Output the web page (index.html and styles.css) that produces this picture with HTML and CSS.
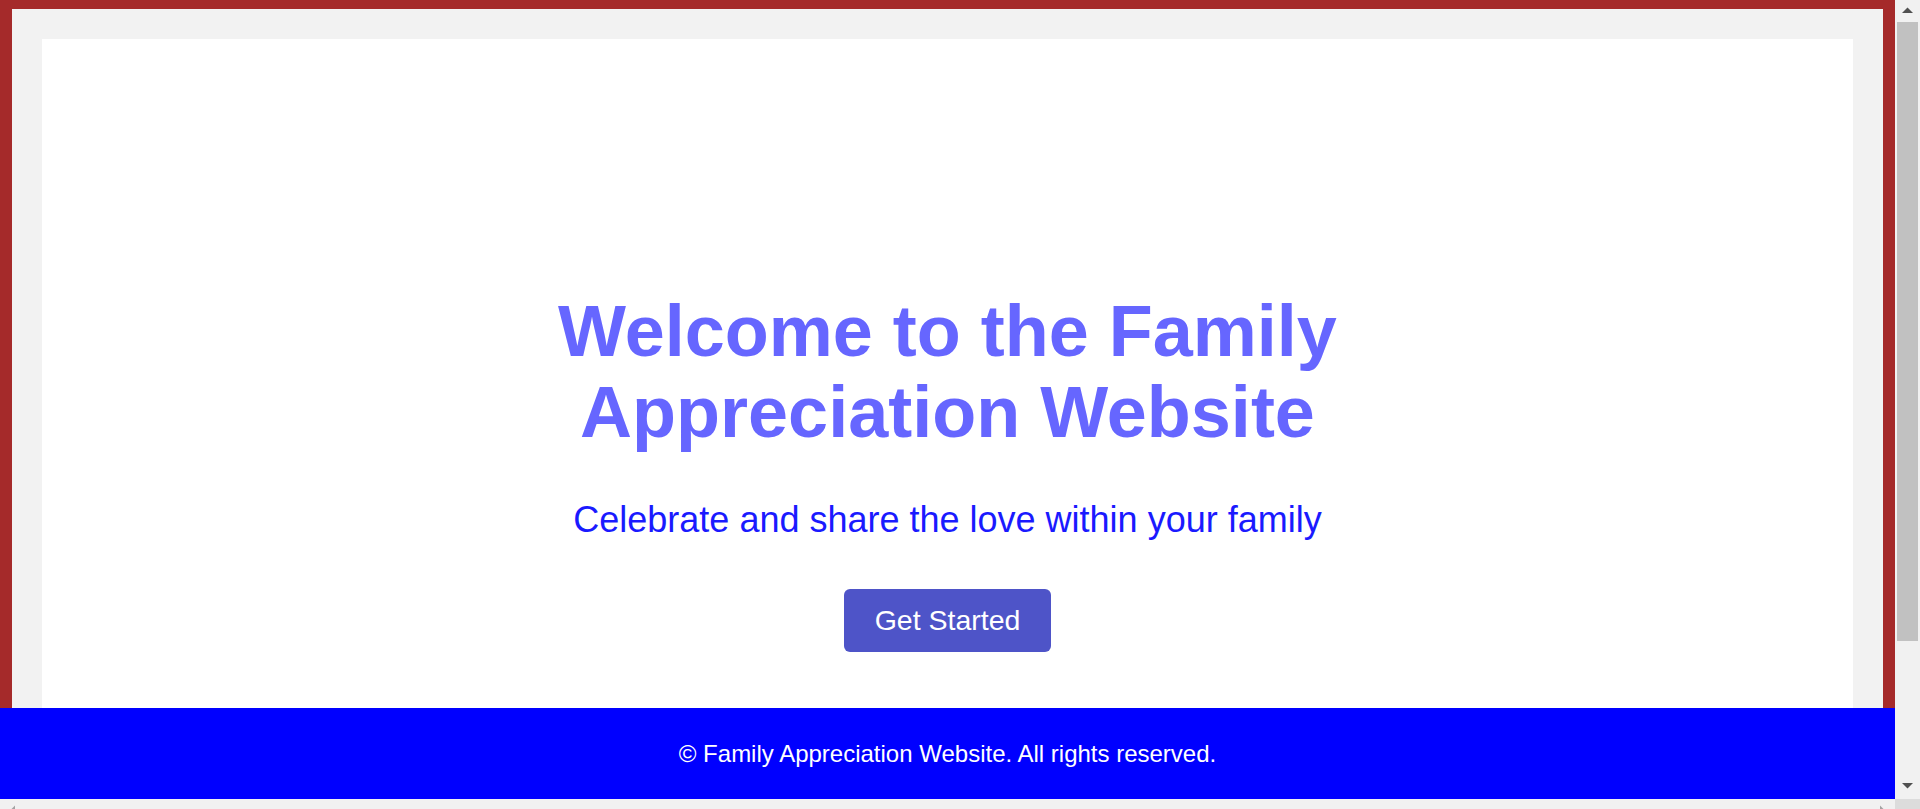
FILE: index.html
```html
<!DOCTYPE html>
<html lang="en">
<head>
<meta charset="UTF-8">
<title>Family Appreciation Website</title>
<link rel="stylesheet" href="styles.css">
</head>
<body>
  <div class="frame">
    <div class="viewport">
      <div class="sheet">
        <main class="page">
          <section class="hero">
            <h1 class="hero-title">Welcome to the Family Appreciation Website</h1>
            <p class="hero-subtitle">Celebrate and share the love within your family</p>
            <a class="hero-button" href="#">Get Started</a>
          </section>
        </main>
      </div>
      <footer class="site-footer">
        <p class="footer-text">&copy; Family Appreciation Website. All rights reserved.</p>
      </footer>
    </div>
    <div class="vscroll">
      <div class="vscroll-btn vscroll-btn-up">
        <svg width="25" height="20" viewBox="0 0 25 20"><polygon points="7,13 18,13 12.5,7.5" fill="#505050"/></svg>
      </div>
      <div class="vscroll-track">
        <div class="vscroll-thumb"></div>
      </div>
      <div class="vscroll-btn vscroll-btn-down">
        <svg width="25" height="20" viewBox="0 0 25 20"><polygon points="7,4 18,4 12.5,9.5" fill="#505050"/></svg>
      </div>
    </div>
    <div class="hscroll">
      <div class="hscroll-btn">
        <svg width="25" height="10" viewBox="0 0 25 10"><polygon points="9,12.5 15,6.5 15,18.5" fill="#a3a3a3"/></svg>
      </div>
      <div class="hscroll-track"></div>
      <div class="hscroll-btn">
        <svg width="25" height="10" viewBox="0 0 25 10"><polygon points="16,12.5 10,6.5 10,18.5" fill="#a3a3a3"/></svg>
      </div>
    </div>
    <div class="scroll-corner"></div>
  </div>
</body>
</html>
```
FILE: styles.css
```css
html,
body {
  margin: 0;
  height: 100%;
  overflow: hidden;
}

body {
  font-family: "Liberation Sans", Arial, sans-serif;
}

.frame {
  display: grid;
  grid-template-columns: 1fr 25px;
  grid-template-rows: 1fr 10px;
  height: 100vh;
}

.viewport {
  position: relative;
  overflow: hidden;
}

.sheet {
  border: 12px solid #a52a2a;
  border-top-width: 9px;
  padding: 30px;
  background: #f2f2f2;
}

.page {
  background: #ffffff;
  min-height: 893px;
}

.hero {
  padding-top: 251.5px;
  display: flex;
  flex-direction: column;
  align-items: center;
  text-align: center;
}

.hero-title {
  max-width: 800px;
  margin: 0 0 46.3px;
  font-size: 72px;
  line-height: 81px;
  font-weight: bold;
  color: #6666ff;
}

.hero-subtitle {
  margin: 0 0 48px;
  font-size: 36px;
  color: #1a1aff;
}

.hero-button {
  display: inline-block;
  padding: 15px 31px;
  font-size: 28.5px;
  color: #ffffff;
  background: #4e54c8;
  border-radius: 6px;
  text-decoration: none;
}

.site-footer {
  position: absolute;
  left: 0;
  right: 0;
  bottom: 0;
  background: #0000ff;
  padding: 31.5px 0;
  text-align: center;
}

.footer-text {
  margin: 0;
  font-size: 24px;
  color: #ffffff;
}

/* scrollbars */
.vscroll {
  display: flex;
  flex-direction: column;
  background: #f1f1f1;
}

.vscroll-btn {
  height: 20px;
  flex: none;
}

.vscroll-btn svg,
.hscroll-btn svg {
  display: block;
}

.vscroll-track {
  flex: 1;
  padding: 2px 2px 0;
}

.vscroll-thumb {
  height: 619px;
  background: #c1c1c1;
}

.hscroll {
  display: flex;
  background: #f1f1f1;
  overflow: hidden;
}

.hscroll-btn {
  width: 25px;
  flex: none;
  overflow: hidden;
}

.hscroll-track {
  flex: 1;
}

.scroll-corner {
  background: #dcdcdc;
}
```
